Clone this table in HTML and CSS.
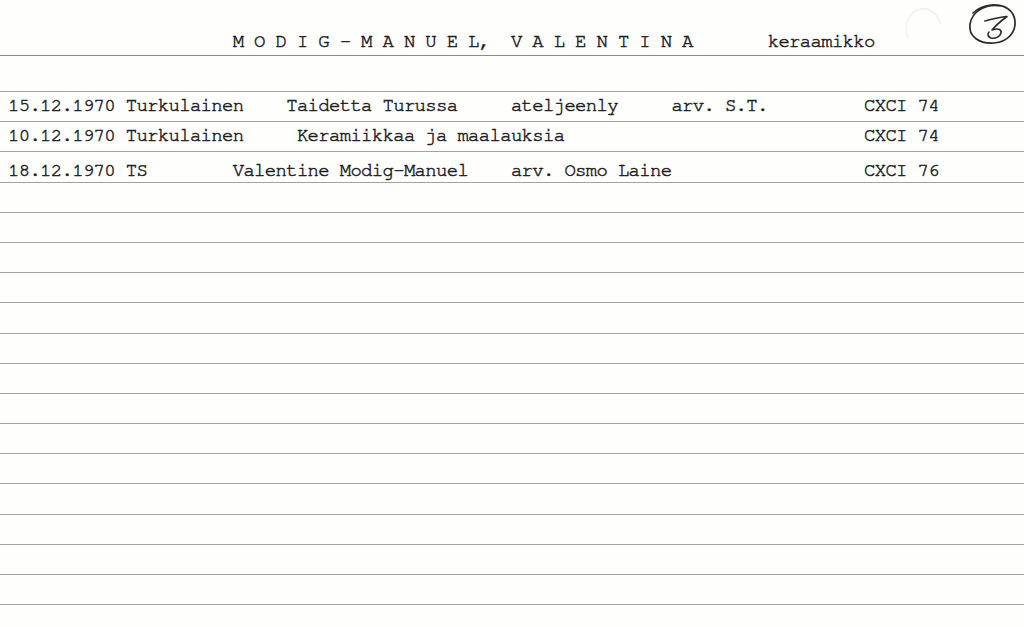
FILE: index.html
```html
<!DOCTYPE html>
<html lang="fi">
<head>
<meta charset="utf-8">
<title>Modig-Manuel, Valentina</title>
<link rel="stylesheet" href="styles.css">
</head>
<body>
<main class="card">
  <header class="card-head">
    <p class="typed head-line">                     M O D I G - M A N U E L,  V A L E N T I N A       keraamikko</p>
    <svg class="card-no" width="60" height="50" viewBox="0 0 60 50" aria-hidden="true">
      <path d="M36 5 C20 2 7 11 5 23 C3 36 15 43 29 42 C43 41 51 31 50 20 C49 9 39 3 26 4 C18 5 12 8 8 12" fill="none" stroke="#2a2a2a" stroke-width="1.7" stroke-linecap="round"/>
      <path d="M20 20 C27 18 35 16 42 15.5 C36 20 31 24 27 29 C32 27 37 28 36 32 C35 36 30 38 26 37 C23 36 22 33 24 31" fill="none" stroke="#2a2a2a" stroke-width="1.6" stroke-linecap="round" stroke-linejoin="round"/>
    </svg>
    <svg class="pencil" width="50" height="46" viewBox="0 0 50 46" aria-hidden="true">
      <path d="M8 36 C3 24 8 10 20 7 C30 5 38 12 40 22" fill="none" stroke="#ededed" stroke-width="1.2"/>
    </svg>
  </header>
  <section class="ruled">
    <p class="row typed">15.12.1970 Turkulainen    Taidetta Turussa     ateljeenly     arv. S.T.         CXCI 74</p>
    <p class="row typed">10.12.1970 Turkulainen     Keramiikkaa ja maalauksia                            CXCI 74</p>
    <p class="row typed drop">18.12.1970 TS        Valentine Modig-Manuel    arv. Osmo Laine                  CXCI 76</p>
    <p class="row"></p>
    <p class="row"></p>
    <p class="row"></p>
    <p class="row"></p>
    <p class="row"></p>
    <p class="row"></p>
    <p class="row"></p>
    <p class="row"></p>
    <p class="row"></p>
    <p class="row"></p>
    <p class="row"></p>
    <p class="row"></p>
    <p class="row"></p>
    <p class="row"></p>
  </section>
</main>
</body>
</html>
```
FILE: styles.css
```css
html, body {
  margin: 0;
  padding: 0;
  background: #fdfdfc;
}

.card {
  width: 1024px;
  height: 627px;
  overflow: hidden;
  background: #fefefd;
}

.typed {
  margin: 0;
  font-family: "Nimbus Mono PS", "Nimbus Mono L", "FreeMono", "Courier 10 Pitch", "Liberation Mono", monospace;
  font-size: 19px;
  letter-spacing: -0.7px;
  color: #1c1c1c;
  -webkit-text-stroke: 0.5px #1c1c1c;
  white-space: pre;
}

.card-head {
  position: relative;
  height: 56px;
  box-sizing: border-box;
  padding: 32px 0 0 8px;
  border-bottom: 1px solid #8a8a8a;
}

.head-line {
  line-height: 20px;
}

.card-no {
  position: absolute;
  left: 965px;
  top: 1px;
}

.pencil {
  position: absolute;
  left: 900px;
  top: 2px;
}

.ruled {
  margin-top: 35px;
  border-top: 1px solid #a2a2a2;
}

.row {
  margin: 0;
  height: 30.2px;
  box-sizing: border-box;
  padding-left: 8px;
  line-height: 28px;
  border-bottom: 1px solid #a2a2a2;
}

.row.drop {
  padding-top: 5px;
}
```
